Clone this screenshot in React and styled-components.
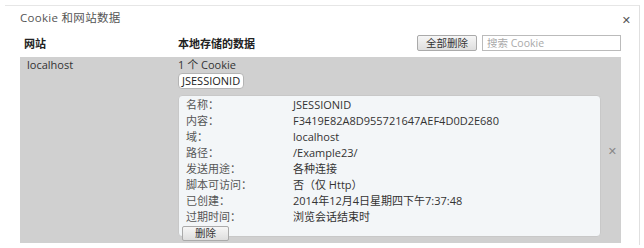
import React from 'react';
import styled, { createGlobalStyle } from 'styled-components';

const GlobalStyle = createGlobalStyle`
  html, body {
    margin: 0;
    padding: 0;
    background: #fff;
  }
  body {
    font-family: 'Open Sans', 'Noto Sans CJK SC', sans-serif;
    font-size: 11px;
    color: #333;
  }
`;

const Dialog = styled.div`
  position: relative;
  width: 635px;
  height: 240px;
  margin-top: 5px;
  margin-left: 5px;
  border-top: 1px solid #e6e6e6;
  border-right: 1px solid #e0e0e0;
  box-sizing: border-box;
  padding: 0 18px 0 15px;
`;

const Title = styled.div`
  height: 25px;
  line-height: 24px;
  font-size: 11.5px;
  color: #555;
  letter-spacing: 0.3px;
`;

const Close = styled.span`
  position: absolute;
  right: ${(p) => p.$right}px;
  top: ${(p) => p.$top}px;
  font-size: 11px;
  color: ${(p) => p.$color || '#555'};
  font-family: 'DejaVu Sans', sans-serif;
  font-weight: bold;
  line-height: 1;
`;

const Header = styled.div`
  display: flex;
  align-items: center;
  height: 24px;
  padding-left: 4px;
`;

const HeadCell = styled.div`
  font-weight: bold;
  color: #222;
  width: ${(p) => p.$width}px;
`;

const Tools = styled.div`
  margin-left: auto;
  display: flex;
  gap: 5px;
`;

const Button = styled.button`
  font-family: inherit;
  font-size: 10.5px;
  color: #333;
  height: ${(p) => p.$h || 16}px;
  padding: 0 ${(p) => p.$px || 10}px;
  border: 1px solid #aaa;
  border-radius: 2px;
  background: linear-gradient(#f6f6f6, #dedede);
  line-height: 1;
`;

const Search = styled.input`
  font-family: inherit;
  font-size: 10.5px;
  width: 139px;
  height: 16px;
  box-sizing: border-box;
  border: 1px solid #bbb;
  padding: 0 4px;
  &::placeholder {
    color: #aaa;
  }
`;

const Row = styled.div`
  position: relative;
  display: flex;
  background: #d0d0d0;
  height: 186px;
  margin-top: 2px;
  padding: 2px 0 0 7px;
  box-sizing: border-box;
`;

const Site = styled.div`
  width: 151px;
  color: #333;
  font-weight: 500;
  line-height: 12px;
`;

const Data = styled.div`
  display: flex;
  flex-direction: column;
  align-items: flex-start;
`;

const Count = styled.div`
  height: 14px;
  line-height: 12px;
  color: #333;
`;

const Chip = styled.div`
  background: #fff;
  border: 1px solid #b4b4b4;
  border-radius: 4px;
  padding: 0 3px;
  height: 14px;
  line-height: 14px;
  color: #222;
`;

const Card = styled.div`
  margin-top: 6px;
  width: 423px;
  height: 142px;
  box-sizing: border-box;
  background: #f3f6f8;
  border: 1px solid #c8c8c8;
  border-radius: 4px;
  padding: 1px 3px 0;
`;

const Field = styled.div`
  display: flex;
  height: 16px;
  line-height: 16px;
  padding-left: 4px;
`;

const Label = styled.div`
  width: 107px;
  color: #555;
`;

const Value = styled.div`
  color: #333;
`;

const fields = [
  ['名称：', 'JSESSIONID'],
  ['内容：', 'F3419E82A8D955721647AEF4D0D2E680'],
  ['域：', 'localhost'],
  ['路径：', '/Example23/'],
  ['发送用途：', '各种连接'],
  ['脚本可访问：', '否（仅 Http）'],
  ['已创建：', '2014年12月4日星期四下午7:37:48'],
  ['过期时间：', '浏览会话结束时'],
];

export default function App() {
  return (
    <>
      <GlobalStyle />
      <Dialog>
        <Title>Cookie 和网站数据</Title>
        <Close $right={8} $top={9}>✕</Close>
        <Header>
          <HeadCell $width={154}>网站</HeadCell>
          <HeadCell>本地存储的数据</HeadCell>
          <Tools>
            <Button $px={8}>全部删除</Button>
            <Search placeholder="搜索 Cookie" />
          </Tools>
        </Header>
        <Row>
          <Site>localhost</Site>
          <Data>
            <Count>1 个 Cookie</Count>
            <Chip>JSESSIONID</Chip>
            <Card>
              {fields.map(([k, v]) => (
                <Field key={k}>
                  <Label>{k}</Label>
                  <Value>{v}</Value>
                </Field>
              ))}
              <Button $h={15} $px={12}>删除</Button>
            </Card>
          </Data>
          <Close $right={4} $top={89} $color="#888">✕</Close>
        </Row>
      </Dialog>
    </>
  );
}
